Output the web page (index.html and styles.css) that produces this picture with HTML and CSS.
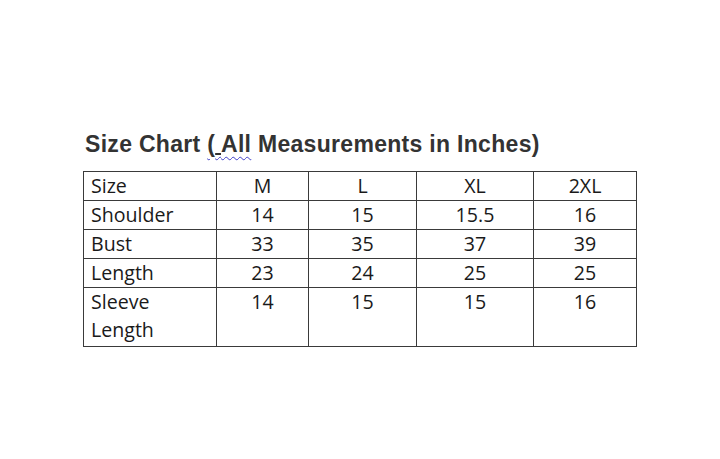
FILE: index.html
```html
<!DOCTYPE html>
<html>
<head>
<meta charset="utf-8">
<link rel="stylesheet" href="styles.css">
</head>
<body>
<div class="page">
  <h1 class="title">Size Chart <span class="spell">(<span class="ul"> </span>All</span> Measurements in Inches)</h1>
  <table class="chart">
    <colgroup>
      <col class="c1"><col class="c2"><col class="c3"><col class="c4"><col class="c5">
    </colgroup>
    <tr><td class="label">Size</td><td>M</td><td>L</td><td>XL</td><td>2XL</td></tr>
    <tr><td class="label">Shoulder</td><td>14</td><td>15</td><td>15.5</td><td>16</td></tr>
    <tr><td class="label">Bust</td><td>33</td><td>35</td><td>37</td><td>39</td></tr>
    <tr><td class="label">Length</td><td>23</td><td>24</td><td>25</td><td>25</td></tr>
    <tr class="last"><td class="label">Sleeve<br>Length</td><td>14</td><td>15</td><td>15</td><td>16</td></tr>
  </table>
</div>
</body>
</html>
```
FILE: styles.css
```css
html, body {
  margin: 0;
  padding: 0;
  background: #ffffff;
}
.page {
  width: 720px;
  height: 459px;
  padding: 132px 0 0 85px;
  box-sizing: border-box;
}
.title {
  margin: 0;
  font-family: "Liberation Sans", Arial, sans-serif;
  font-weight: bold;
  font-size: 23px;
  letter-spacing: 0.3px;
  line-height: 25px;
  color: #333333;
  white-space: nowrap;
}
.spell {
  text-decoration: underline wavy #4040c8;
  text-decoration-thickness: 1px;
  text-underline-offset: 4px;
}
.ul {
  text-decoration: underline solid #333333;
  text-decoration-thickness: 2px;
  text-underline-offset: 1px;
}
.chart {
  margin: 14px 0 0 -2px;
  border-collapse: collapse;
  table-layout: fixed;
  width: 553px;
  font-family: "Open Sans", "Noto Sans", sans-serif;
  font-size: 19.6px;
  color: #1a1a1a;
}
.c1 { width: 133px; }
.c2 { width: 92px; }
.c3 { width: 108px; }
.c4 { width: 117px; }
.c5 { width: 103px; }
.chart td {
  border: 1px solid #3a3a3a;
  padding: 0;
  line-height: 28px;
  text-align: center;
  vertical-align: top;
}
.chart td.label {
  text-align: left;
  padding-left: 7px;
}
.chart tr.last td {
  padding-bottom: 2px;
}
```
